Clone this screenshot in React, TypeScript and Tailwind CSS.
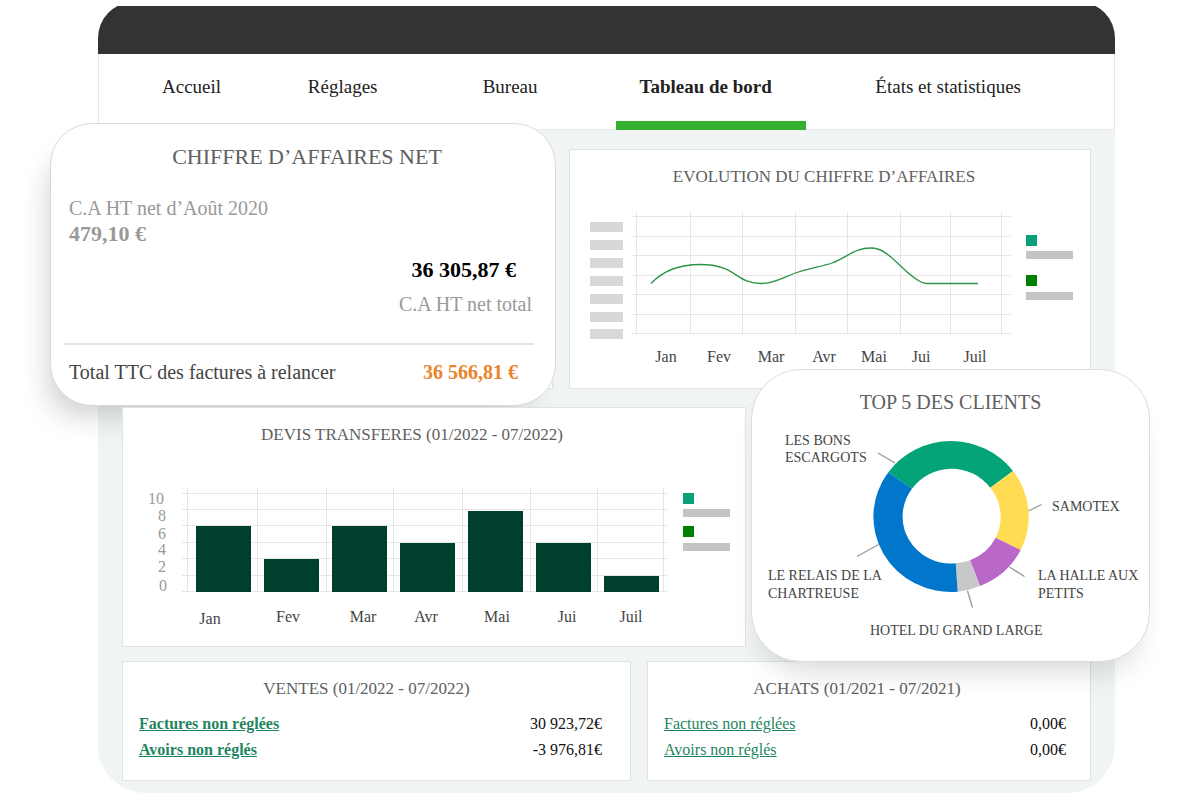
import type { ReactNode } from 'react';
import clsx from 'clsx';

const navs = [
  { href: '#accueil', label: 'Accueil' },
  { href: '#reglages', label: 'Réglages' },
  { href: '#bureau', label: 'Bureau' },
  { href: '#tableau-de-bord', label: 'Tableau de bord', active: true },
  { href: '#etats', label: 'États et statistiques' },
];

function Header() {
  return (
    <header>
      {/* Barre sombre */}
      <div className="-mt-1 h-[52px] rounded-t-[36px] bg-[#333333]" />
      <nav className="grid h-[76px] grid-cols-[146fr_175fr_133fr_191fr_308fr] border border-t-0 border-[#e6e8e9] bg-white pl-[63px] text-[19px] text-[#222]">
        {navs.map(nav => (
          <a
            key={nav.href}
            href={nav.href}
            className={clsx(
              'relative whitespace-nowrap pt-5 leading-[26px]',
              nav.active && 'pl-6 font-bold',
              nav.href === '#etats' && 'pl-[69px]'
            )}
          >
            {nav.label}
            {nav.active && <span className="absolute inset-x-0 -bottom-px h-[9px] bg-[#33b02e]" />}
          </a>
        ))}
      </nav>
    </header>
  );
}

type PanelProps = { title: string; className?: string; titleClass?: string; children: ReactNode };

function Panel({ title, className, titleClass, children }: PanelProps) {
  return (
    <section className={clsx('border border-[#e0e2e3] bg-white', className)}>
      <h2 className={clsx('pt-[17px] text-center text-[17px] leading-5 text-[#606060]', titleClass)}>{title}</h2>
      {children}
    </section>
  );
}

function Legend({ x, rows }: { x: number; rows: number[][] }) {
  return (
    <>
      <rect x={x} y={rows[0][0]} width="11" height="11" fill="#0a9f78" />
      <rect x={x} y={rows[0][1]} width="47" height="8" fill="#c4c4c4" />
      <rect x={x} y={rows[1][0]} width="11" height="11" fill="#008000" />
      <rect x={x} y={rows[1][1]} width="47" height="8" fill="#c4c4c4" />
    </>
  );
}

const lineMonths = [
  { label: 'Jan', x: 96 },
  { label: 'Fev', x: 149 },
  { label: 'Mar', x: 201 },
  { label: 'Avr', x: 254 },
  { label: 'Mai', x: 304 },
  { label: 'Jui', x: 351 },
  { label: 'Juil', x: 405 },
];

function LineChart() {
  return (
    <svg viewBox="0 0 520 198" className="mt-[3px] block w-full" role="img" aria-label="Evolution du chiffre d’affaires">
      {[32, 50, 68, 86, 104, 122, 139].map(y => (
        <rect key={y} x="20" y={y} width="33" height="10" fill="#d8d8d8" />
      ))}
      <g stroke="#e6e6e6">
        {[26.5, 46.5, 65.5, 85.5, 104.5, 124.5, 143.5].map(y => (
          <line key={y} x1="62" x2="441" y1={y} y2={y} />
        ))}
        {[66.5, 120.5, 172.5, 225.5, 277.5, 330.5, 380.5, 431.5].map(x => (
          <line key={x} x1={x} x2={x} y1="22" y2="144" />
        ))}
      </g>
      <path
        d="M81 93.5C90 84 105 74.5 130 74.5C168 74.5 164 93.5 192 93.5C204 93.5 214 87 224 83.5C238 78 250 77 262 73C278 67 284 58 301 58C320 58 332 83 351 92Q354 93.5 357 93.5H408"
        fill="none"
        stroke="#2b9348"
        strokeWidth="1.3"
      />
      <Legend x={456} rows={[[45, 61], [85, 102]]} />
      <g fontSize="16" fill="#444" textAnchor="middle">
        {lineMonths.map(m => (
          <text key={m.label} x={m.x} y="172">{m.label}</text>
        ))}
      </g>
    </svg>
  );
}

const bars = [
  { label: 'Jan', x: 73, height: 66, tx: 87, ty: 176 },
  { label: 'Fev', x: 141, height: 33, tx: 165, ty: 174 },
  { label: 'Mar', x: 209, height: 66, tx: 240, ty: 174 },
  { label: 'Avr', x: 277, height: 49, tx: 303, ty: 174 },
  { label: 'Mai', x: 345, height: 81, tx: 374, ty: 174 },
  { label: 'Jui', x: 413, height: 49, tx: 444, ty: 174 },
  { label: 'Juil', x: 481, height: 16, tx: 508, ty: 174 },
];

const ticks = [
  { label: '10', x: 33, y: 56 },
  { label: '8', x: 39, y: 73 },
  { label: '6', x: 39, y: 91 },
  { label: '4', x: 39, y: 107 },
  { label: '2', x: 39, y: 124 },
  { label: '0', x: 40, y: 143 },
];

function BarChart() {
  return (
    <svg viewBox="0 0 622 198" className="mt-[3px] block w-full" role="img" aria-label="Devis transférés">
      <g stroke="#e6e6e6">
        {[45.5, 61.5, 77.5, 94.5, 110.5, 127.5, 143.5].map(y => (
          <line key={y} x1="59" x2="544" y1={y} y2={y} />
        ))}
        {[64.5, 134.5, 203.5, 270.5, 339.5, 407.5, 474.5, 540.5].map(x => (
          <line key={x} x1={x} x2={x} y1="40" y2="144" />
        ))}
      </g>
      {bars.map(bar => (
        <rect key={bar.label} x={bar.x} y={144 - bar.height} width="55" height={bar.height} fill="#003e2d" />
      ))}
      <Legend x={560} rows={[[45, 61], [78, 95]]} />
      <g fontSize="16" fill="#999" textAnchor="middle">
        {ticks.map(tick => (
          <text key={tick.label} x={tick.x} y={tick.y}>{tick.label}</text>
        ))}
      </g>
      <g fontSize="16" fill="#444" textAnchor="middle">
        {bars.map(bar => (
          <text key={bar.label} x={bar.tx} y={bar.ty}>{bar.label}</text>
        ))}
      </g>
    </svg>
  );
}

function RevenueCard() {
  return (
    <section className="absolute -bottom-[18px] -left-[73px] -right-1 -top-[27px] z-10 rounded-[42px] border border-[#d9d9d9] bg-white pl-[13px] pr-[21px] shadow-[-14px_22px_30px_-14px_rgba(0,0,0,0.2)]">
      <h2 className="pl-4 pt-[19px] text-center text-[22px] leading-7 text-[#606060]">CHIFFRE D’AFFAIRES NET</h2>
      <div className="mt-6 pl-[5px] text-[#999]">
        <p className="text-xl leading-[26px]">C.A HT net d’Août 2020</p>
        <p className="text-[22px] font-bold leading-[26px]">479,10 €</p>
      </div>
      <div className="mt-[10px] pr-[2px] text-right">
        <p className="pr-4 text-[22px] font-bold leading-[26px] text-black">36 305,87 €</p>
        <p className="mt-2 text-xl leading-[26px] text-[#999]">C.A HT net total</p>
      </div>
      <div className="mt-[26px] flex justify-between border-t-2 border-[#e4e4e4] pl-[5px] pr-4 pt-[14px] text-xl leading-[26px]">
        <span className="text-[#444]">Total TTC des factures à relancer</span>
        <span className="font-bold text-[#ea8429]">36 566,81 €</span>
      </div>
    </section>
  );
}

function ClientsCard() {
  return (
    <section className="absolute -bottom-[15px] -left-[11px] -right-[59px] -top-[38px] z-30 rounded-[50px] border border-[#dcdcdc] bg-white shadow-[0_22px_30px_-14px_rgba(0,0,0,0.16)]">
      <h2 className="pt-5 text-center text-xl leading-6 text-[#606060]">TOP 5 DES CLIENTS</h2>
      <svg viewBox="0 0 397 246" className="block w-full" role="img" aria-label="Top 5 des clients">
        <path d="M136.3 58.3A77.5 75.3 0 0 1 261 57L238.3 73.7A48.3 47 0 0 0 160 74.7Z" fill="#04a478" />
        <path d="M261 57A77.5 75.3 0 0 1 268.7 136L243.7 123.7A48.3 47 0 0 0 238.3 73.7Z" fill="#ffdc52" />
        <path d="M268.7 136A77.5 75.3 0 0 1 228 172L218 146.3A48.3 47 0 0 0 243.7 123.7Z" fill="#b968c7" />
        <path d="M228 172A77.5 75.3 0 0 1 205.7 177.7L203.7 149.3A48.3 47 0 0 0 218 146.3Z" fill="#c8c8ca" />
        <path d="M205.7 177.7A77.5 75.3 0 0 1 136.3 58.3L160 74.7A48.3 47 0 0 0 203.7 149.3Z" fill="#0077cb" />
        <path
          d="M126 39L143 49M276.5 97L289.5 90.5M257.5 153L272.5 162.5M215.5 177L220.5 193.5M105 142.5L126.5 130.5"
          stroke="#999"
          strokeWidth="1.3"
        />
        <g fontSize="14" fill="#444">
          <text x="33" y="31">LES BONS</text>
          <text x="33" y="48">ESCARGOTS</text>
          <text x="300" y="97">SAMOTEX</text>
          <text x="16" y="166">LE RELAIS DE LA</text>
          <text x="16" y="184">CHARTREUSE</text>
          <text x="286" y="166">LA HALLE AUX</text>
          <text x="286" y="184">PETITS</text>
          <text x="118" y="221">HOTEL DU GRAND LARGE</text>
        </g>
      </svg>
    </section>
  );
}

function Amounts({ rows, bold }: { rows: { label: string; value: string }[]; bold?: boolean }) {
  return (
    <table className="mb-[17px] mt-3 w-full text-base leading-[26px]">
      <tbody>
        {rows.map(row => (
          <tr key={row.label}>
            <th className={clsx('p-0 pl-4 text-left', bold ? 'font-bold' : 'font-normal')}>
              <a href="#details" className="text-[#1f855f] underline">{row.label}</a>
            </th>
            <td className={clsx('p-0 text-right text-[#111]', bold ? 'pr-7' : 'pr-6')}>{row.value}</td>
          </tr>
        ))}
      </tbody>
    </table>
  );
}

export default function App() {
  return (
    <div className="min-h-screen bg-white pb-[7px] pl-[98px] pr-[85px] pt-1.5 font-['Liberation_Serif',serif]">
      <div className="overflow-hidden">
        <Header />
      </div>
      <main className="rounded-b-[48px] bg-[#f0f4f5] px-6 pb-3 pt-[19px]">
        <div className="mb-[18px] grid grid-cols-[431fr_522fr] gap-4">
          <div className="relative border border-[#e0e2e3] bg-white">
            <RevenueCard />
          </div>
          <Panel title="EVOLUTION DU CHIFFRE D’AFFAIRES" titleClass="pr-3">
            <LineChart />
          </Panel>
        </div>
        <div className="mb-[14px] grid grid-cols-[624fr_329fr] gap-4">
          <Panel title="DEVIS TRANSFERES (01/2022 - 07/2022)" className="relative z-20" titleClass="pr-11">
            <BarChart />
          </Panel>
          <div className="relative">
            <ClientsCard />
          </div>
        </div>
        <div className="grid grid-cols-[509fr_444fr] gap-4">
          <Panel title="VENTES (01/2022 - 07/2022)" titleClass="pr-5">
            <Amounts
              bold
              rows={[
                { label: 'Factures non réglées', value: '30 923,72€' },
                { label: 'Avoirs non réglés', value: '-3 976,81€' },
              ]}
            />
          </Panel>
          <Panel title="ACHATS (01/2021 - 07/2021)" titleClass="pr-6">
            <Amounts
              rows={[
                { label: 'Factures non réglées', value: '0,00€' },
                { label: 'Avoirs non réglés', value: '0,00€' },
              ]}
            />
          </Panel>
        </div>
      </main>
    </div>
  );
}
